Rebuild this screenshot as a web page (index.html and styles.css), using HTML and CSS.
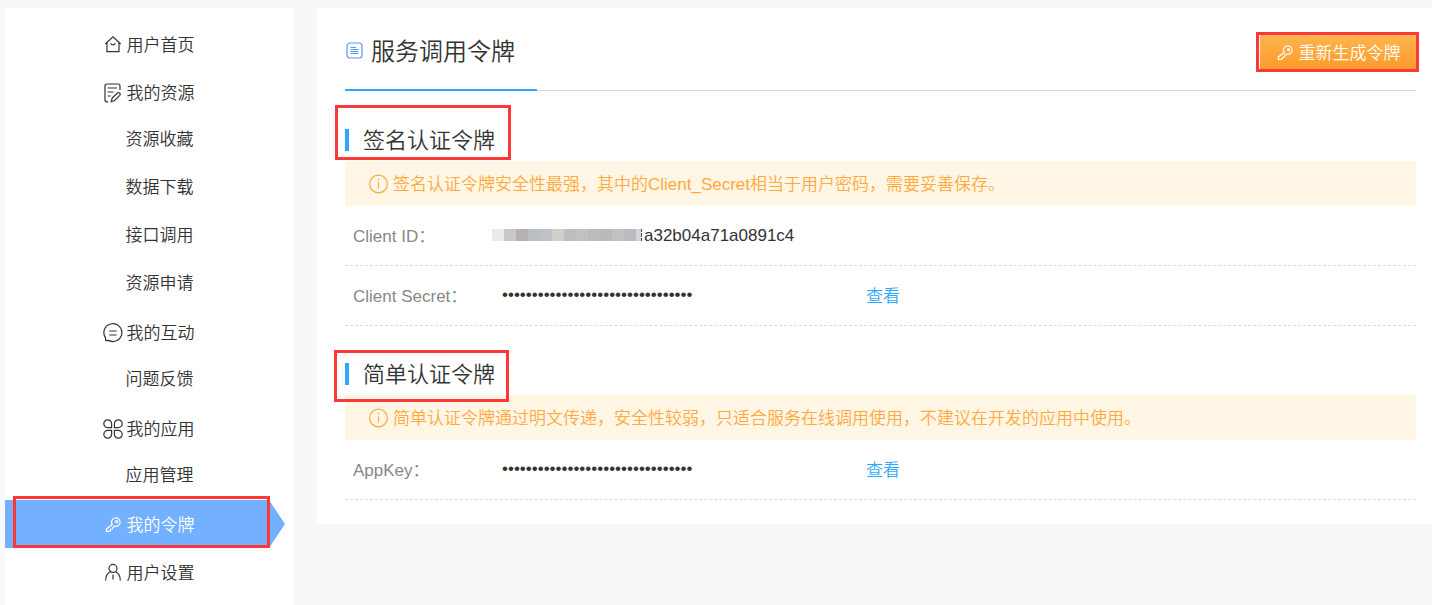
FILE: index.html
```
<!DOCTYPE html>
<html lang="zh-CN">
	<head>
		<meta charset="UTF-8">
		<title>服务调用令牌</title>
		<link rel="stylesheet" href="styles.css">
	</head>
	<body>
		<!-- 公用的图标 -->
		<svg class="sprite" aria-hidden="true">
			<symbol id="icon-key" viewBox="0 0 20 20">
				<path d="M9.3 9.6A4.3 4.3 0 1 1 11.5 11.2L9.8 12.6L9.3 14L7.7 14.2L7.3 15.8L5.8 16.4H3.4V13.9L9.3 9.6Z"/>
				<circle cx="13.6" cy="6.7" r="1"/>
			</symbol>
			<symbol id="icon-info" viewBox="0 0 20 20">
				<circle cx="9.5" cy="10" r="8.9"/>
				<path d="M9.5 8.2V14.6M9.5 5V6.6"/>
			</symbol>
		</svg>

		<div class="page">
			<!-- 左侧菜单 -->
			<nav class="sidebar">
				<ul class="menu">
					<li><a class="menu-item" href="#">
						<svg class="icon" viewBox="0 0 20 20"><path d="M2.3 9L10 1.9L17.7 9M4 7.6V16.6H16V7.6M7.5 8.4Q10 11.4 12.5 8.4"/></svg>
						用户首页</a></li>
					<li><a class="menu-item" href="#">
						<svg class="icon" viewBox="0 0 20 20"><path d="M5.2 18.8H4Q2 18.8 2 16.8V3Q2 1 4 1H15Q17 1 17 3V7M4.6 5H14M4.6 9H10.5M4.6 13H7.6M9.2 15L14.8 9.8Q15.8 9.2 16.8 10.2Q17.8 11.3 16.8 12.4L11.3 17.8L8.2 18.6Z"/></svg>
						我的资源</a></li>
					<li><a class="menu-item menu-sub" href="#">资源收藏</a></li>
					<li><a class="menu-item menu-sub" href="#">数据下载</a></li>
					<li><a class="menu-item menu-sub" href="#">接口调用</a></li>
					<li><a class="menu-item menu-sub" href="#">资源申请</a></li>
					<li><a class="menu-item" href="#">
						<svg class="icon" viewBox="0 0 20 20"><path d="M2.6 17.7V14.8A9 8.9 0 1 1 5.6 17.4L2.6 17.7M6.3 8H13.7M6.3 12H13.7"/></svg>
						我的互动</a></li>
					<li><a class="menu-item menu-sub" href="#">问题反馈</a></li>
					<li><a class="menu-item" href="#">
						<svg class="icon" viewBox="0 0 20 20"><path d="M8.6 8.6H5A3.9 3.9 0 1 1 8.6 4.8ZM11.4 8.6H15A3.9 3.9 0 1 0 11.4 4.8ZM8.6 11.4H5A3.9 3.9 0 1 0 8.6 15.2ZM11.4 11.4H15A3.9 3.9 0 1 1 11.4 15.2Z"/></svg>
						我的应用</a></li>
					<li><a class="menu-item menu-sub" href="#">应用管理</a></li>
					<li><a class="menu-item active" href="#">
						<svg class="icon"><use href="#icon-key"/></svg>
						我的令牌<span class="mark mark-menu"></span></a></li>
					<li><a class="menu-item" href="#">
						<svg class="icon" viewBox="0 0 20 20"><circle cx="10" cy="5.4" r="4"/><path d="M7.4 8.8Q2.7 11 2.7 17.6M12.6 8.8Q17.3 11 17.3 17.6M10 11.4V16.4"/></svg>
						用户设置</a></li>
				</ul>
			</nav>

			<!-- 右侧内容 -->
			<main class="content">
				<header class="content-header">
					<h1 class="title">
						<svg class="icon icon-title" viewBox="0 0 20 20"><rect x="2" y="2" width="15" height="15" rx="3"/><path d="M5.5 6.5H11M5.5 8.5H13.5M5.5 10.5H13.5M5.5 12.5H13.5"/></svg>
						服务调用令牌
					</h1>
					<button class="btn" type="button">
						<svg class="icon"><use href="#icon-key"/></svg>
						重新生成令牌<span class="mark mark-btn"></span>
					</button>
				</header>

				<section>
					<h2 class="section-title">签名认证令牌<span class="mark mark-sign"></span></h2>
					<p class="notice">
						<svg class="icon"><use href="#icon-info"/></svg>
						签名认证令牌安全性最强，其中的Client_Secret相当于用户密码，需要妥善保存。
					</p>
					<div class="row">
						<span class="label">Client ID：</span>
						<span class="value">
							<!-- 打码部分 -->
							<svg class="mosaic" viewBox="0 0 152 12" aria-hidden="true">
								<rect width="12" height="12" fill="#ece9e8"/>
								<rect x="12" width="12" height="12" fill="#c6c9c8"/>
								<rect x="24" width="12" height="12" fill="#b7b0ae"/>
								<rect x="36" width="12" height="12" fill="#b9bfc3"/>
								<rect x="48" width="12" height="12" fill="#bfc1c4"/>
								<rect x="60" width="12" height="12" fill="#d0cfca"/>
								<rect x="72" width="12" height="12" fill="#bebebe"/>
								<rect x="84" width="12" height="12" fill="#c3c1be"/>
								<rect x="96" width="12" height="12" fill="#b7bdc1"/>
								<rect x="108" width="12" height="12" fill="#bababa"/>
								<rect x="120" width="12" height="12" fill="#c1c1c4"/>
								<rect x="132" width="12" height="12" fill="#babdbf"/>
								<rect x="144" width="5" height="12" fill="#d5d4d6"/>
								<path d="M149 0H150V3H149ZM149 4H150V8H149ZM149 9H150V12H149Z" fill="#444" stroke="none"/>
							</svg>a32b04a71a0891c4</span>
					</div>
					<div class="row">
						<label class="label" for="secret">Client Secret：</label>
						<input class="secret" id="secret" type="password" value="00000000000000000000000000000000" readonly>
						<a class="view" href="#">查看</a>
					</div>
				</section>

				<section>
					<h2 class="section-title">简单认证令牌<span class="mark mark-simple"></span></h2>
					<p class="notice">
						<svg class="icon"><use href="#icon-info"/></svg>
						简单认证令牌通过明文传递，安全性较弱，只适合服务在线调用使用，不建议在开发的应用中使用。
					</p>
					<div class="row">
						<label class="label" for="appkey">AppKey：</label>
						<input class="secret" id="appkey" type="password" value="00000000000000000000000000000000" readonly>
						<a class="view" href="#">查看</a>
					</div>
				</section>
			</main>
		</div>
	</body>
</html>
```

FILE: styles.css
```
*{
	margin: 0;
	padding: 0;
	box-sizing: border-box;
}

body{
	background-color: #f8f8f8;
	color: #333;
	font: 350 17px/24px "Liberation Sans", "Noto Sans CJK SC", sans-serif;
}

a{
	color: inherit;
	text-decoration: none;
}

.sprite{
	display: none;
}

.icon{
	width: 20px;
	height: 20px;
	flex: none;
	margin-bottom: 2px;
	fill: none;
	stroke: currentColor;
	stroke-width: 1.2;
}

.page{
	display: flex;
	align-items: flex-start;
	gap: 24px;
	padding: 8px 0 0 5px;
}

/*左侧菜单*/
.sidebar{
	flex: none;
	width: 288px;
	min-height: calc(100vh - 8px);
	padding-top: 12px;
	background-color: #fff;
}

.menu{
	list-style: none;
}

.menu-item{
	display: flex;
	align-items: center;
	justify-content: center;
	gap: 4px;
	height: 48px;
	padding: 3px 1px 0 0;
}

/*二级菜单没有图标，把图标的位置空出来*/
.menu-sub{
	padding: 0 3px 0 24px;
}

.active{
	position: relative;
	margin-right: 24px;
	padding-left: 24px;
	background-color: #73b0ff;
	color: #fff;
}

/*右边的箭头*/
.active::after{
	content: "";
	position: absolute;
	top: 0;
	left: 100%;
	border: 24px solid transparent;
	border-left: 16px solid #73b0ff;
	border-right: 0;
}

/*红色标注框*/
.mark{
	position: absolute;
	z-index: 1;
	border: 3px solid #fb3838;
	pointer-events: none;
}

.mark-menu{
	top: -4px;
	right: -1px;
	bottom: 0;
	left: 8px;
}

.mark-btn{
	top: -3px;
	right: -3px;
	bottom: -3px;
	left: -4px;
}

.mark-sign{
	top: -24px;
	left: -14px;
	width: 176px;
	height: 55px;
}

.mark-simple{
	top: -13px;
	left: -15px;
	width: 175px;
	height: 52px;
}

/*右侧内容*/
.content{
	flex: 1;
	min-width: 0;
	padding: 0 16px 24px 28px;
	background-color: #fff;
}

.content-header{
	display: flex;
	align-items: center;
	justify-content: space-between;
	height: 83px;
	margin-bottom: 38px;
	border-bottom: 1px solid #d9d9d9;
}

.title{
	display: flex;
	align-items: center;
	gap: 6px;
	width: 192px;
	height: 83px;
	padding-top: 8px;
	border-bottom: 2px solid #2ea7ff;
	font-size: 24px;
	font-weight: inherit;
	white-space: nowrap;
}

.icon-title{
	color: #5b93f5;
}

.btn{
	position: relative;
	display: flex;
	align-items: center;
	justify-content: center;
	gap: 4px;
	width: 156px;
	height: 34px;
	margin-top: 5px;
	padding: 5px 0 0 3px;
	border: 0;
	background: linear-gradient(#ffb54f, #ff9a2b);
	color: #fff;
	font: inherit;
	cursor: pointer;
}

.section-title{
	position: relative;
	margin: 37px 0 10px;
	padding-left: 14px;
	border-left: 4px solid #2ea7ff;
	font-size: 22px;
	font-weight: inherit;
	line-height: 24px;
	height: 22px;
}

.notice{
	display: flex;
	align-items: center;
	gap: 4px;
	min-height: 45px;
	padding: 3px 24px 0;
	background-color: #fff6e5;
	color: #ffa940;
}

.row{
	display: flex;
	align-items: center;
	height: 60px;
	padding: 2px 0 0 8px;
	border-bottom: 1px dashed #d9d9d9;
}

.label{
	width: 139px;
	color: #888;
}

.value{
	display: flex;
	align-items: center;
	padding-bottom: 2px;
}

.mosaic{
	width: 152px;
	height: 12px;
	margin-bottom: 2px;
}

.secret{
	width: 374px;
	padding: 0 0 4px 10px;
	border: 0;
	outline: 0;
	background: none;
	color: #333;
	font: inherit;
}

.view{
	color: #2ea7ff;
}
```
